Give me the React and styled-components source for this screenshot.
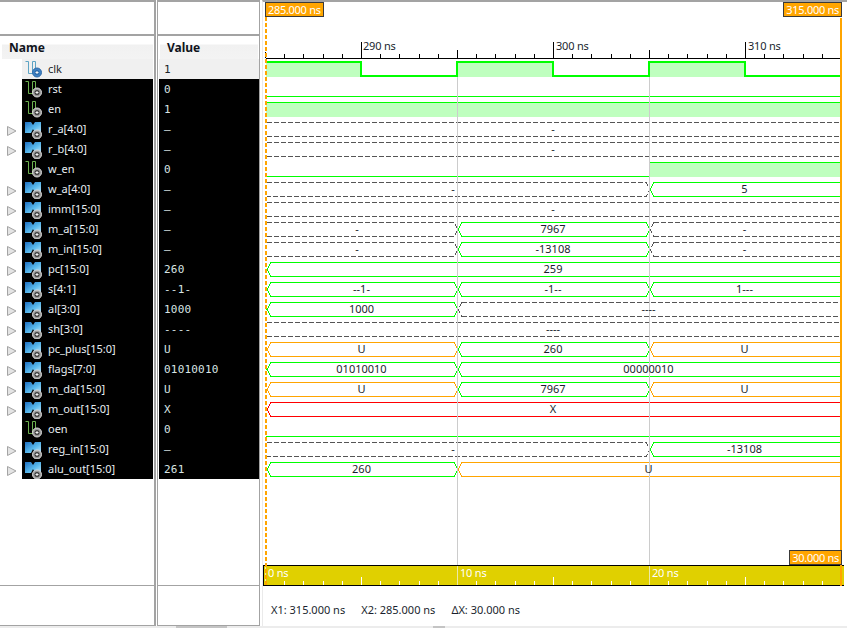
import React from "react";
import styled, { createGlobalStyle } from "styled-components";

const UI_FONT = `"Noto Sans", "DejaVu Sans", sans-serif`;

const GlobalStyle = createGlobalStyle`
  html, body { margin: 0; padding: 0; background: #fff; overflow: hidden; }
`;

const GREEN = "#00ff00";
const ORANGE = "#ffa500";
const RED = "#ff0000";
const DASH = "#555555";

const T0 = 266;
const T1 = 457;
const T2 = 649;
const END = 840;

const rows = [
  { name: "clk", value: "1", kind: "clk", selected: true },
  { name: "rst", value: "0", kind: "low" },
  { name: "en", value: "1", kind: "high" },
  { name: "r_a[4:0]", value: "–", bus: [{ to: END, label: "-", color: DASH }] },
  { name: "r_b[4:0]", value: "–", bus: [{ to: END, label: "-", color: DASH }] },
  { name: "w_en", value: "0", kind: "wen" },
  { name: "w_a[4:0]", value: "–", bus: [{ to: T2, label: "-", color: DASH, lx: 453 }, { to: END, label: "5", color: GREEN }] },
  { name: "imm[15:0]", value: "–", bus: [{ to: END, label: "-", color: DASH }] },
  { name: "m_a[15:0]", value: "–", bus: [{ to: T1, label: "-", color: DASH, lx: 357 }, { to: T2, label: "7967", color: GREEN }, { to: END, label: "-", color: DASH }] },
  { name: "m_in[15:0]", value: "–", bus: [{ to: T1, label: "-", color: DASH, lx: 357 }, { to: T2, label: "-13108", color: GREEN }, { to: END, label: "-", color: DASH }] },
  { name: "pc[15:0]", value: "260", bus: [{ to: END, label: "259", color: GREEN }] },
  { name: "s[4:1]", value: "--1-", bus: [{ to: T1, label: "--1-", color: GREEN }, { to: T2, label: "-1--", color: GREEN }, { to: END, label: "1---", color: GREEN }] },
  { name: "al[3:0]", value: "1000", bus: [{ to: T1, label: "1000", color: GREEN }, { to: END, label: "----", color: DASH }] },
  { name: "sh[3:0]", value: "----", bus: [{ to: END, label: "----", color: DASH }] },
  { name: "pc_plus[15:0]", value: "U", bus: [{ to: T1, label: "U", color: ORANGE }, { to: T2, label: "260", color: GREEN }, { to: END, label: "U", color: ORANGE }] },
  { name: "flags[7:0]", value: "01010010", bus: [{ to: T1, label: "01010010", color: GREEN }, { to: END, label: "00000010", color: GREEN }] },
  { name: "m_da[15:0]", value: "U", bus: [{ to: T1, label: "U", color: ORANGE }, { to: T2, label: "7967", color: GREEN }, { to: END, label: "U", color: ORANGE }] },
  { name: "m_out[15:0]", value: "X", bus: [{ to: END, label: "X", color: RED }] },
  { name: "oen", value: "0", kind: "low" },
  { name: "reg_in[15:0]", value: "–", bus: [{ to: T2, label: "-", color: DASH, lx: 453 }, { to: END, label: "-13108", color: GREEN }] },
  { name: "alu_out[15:0]", value: "261", bus: [{ to: T1, label: "260", color: GREEN }, { to: END, label: "U", color: ORANGE }] },
];

const Page = styled.div`
  width: 847px;
  height: 628px;
  display: flex;
  flex-direction: column;
  font-family: ${UI_FONT};
  background: #fff;
`;

const Panes = styled.div`
  display: flex;
  height: 626px;
`;

const Pane = styled.div`
  display: flex;
  flex-direction: column;
  width: ${(p) => p.$width}px;
  margin-left: ${(p) => p.$gap || 0}px;
  box-sizing: border-box;
  border-top: 2px solid #a3a3a3;
  border-right: ${(p) => p.$edge}px solid #a3a3a3;
  border-left: ${(p) => (p.$gap ? 1 : 0)}px solid #a3a3a3;
  border-bottom: 1px solid #a3a3a3;
`;

const TopBlank = styled.div`
  height: 32px;
  border-bottom: 2px solid #a3a3a3;
`;

const HeaderCell = styled.div`
  height: 23px;
  box-sizing: border-box;
  margin: 0 1px 0 2px;
  padding: 4px 0 0 ${(p) => p.$indent}px;
  font-size: 12px;
  line-height: 16px;
  font-weight: 700;
  color: #10141c;
  background: linear-gradient(#ffffff 0, #ffffff 8px, #f1f1f1 9px, #f3f3f3 100%);
`;

const RowList = styled.div`
  display: flex;
  flex-direction: column;
  flex: 1;
`;

const NameRow = styled.div`
  display: flex;
  height: 20px;
`;

const Expander = styled.div`
  width: 22px;
  flex: none;
  padding-left: 7px;
  box-sizing: border-box;
`;

const NameCell = styled.div`
  flex: 1;
  display: flex;
  align-items: center;
  gap: 6px;
  padding-left: 3px;
  margin-right: 1px;
  font-size: 11px;
  background: ${(p) => (p.$selected ? "#f0f0f0" : "#000")};
  color: ${(p) => (p.$selected ? "#1a1f2a" : "#e8eef2")};
`;

const NameText = styled.span`
  padding-bottom: 2px;
`;

const ValueCell = styled.div`
  height: 20px;
  margin: 0 0 0 1px;
  padding-left: 5px;
  font-family: "DejaVu Sans Mono", "Liberation Mono", monospace;
  font-size: 11px;
  letter-spacing: 0.2px;
  line-height: 22px;
  background: ${(p) => (p.$selected ? "#f0f0f0" : "#000")};
  color: ${(p) => (p.$selected ? "#1a1f2a" : "#d8e4e4")};
`;

const PaneFoot = styled.div`
  height: 39px;
  border-top: 1px solid #a3a3a3;
`;

const WavePane = styled.div`
  position: relative;
  display: flex;
  flex-direction: column;
  width: 585px;
  margin-left: 2px;
  box-sizing: border-box;
  border-top: 2px solid #a3a3a3;
  border-left: 1px solid #eaeaea;
`;

const WaveSvg = styled.svg`
  display: block;
  flex: none;
`;

const WaveLabel = styled.text`
  font-family: ${UI_FONT};
  font-size: 11px;
  fill: #1a1f2e;
  text-anchor: middle;
`;

const RulerLabel = styled.text`
  font-family: ${UI_FONT};
  font-size: 11px;
  letter-spacing: -0.2px;
  fill: ${(p) => p.$fill};
`;

const CursorTag = styled.div`
  position: absolute;
  top: ${(p) => p.$top}px;
  ${(p) => (p.$left !== undefined ? `left: ${p.$left}px;` : `right: ${p.$right}px;`)}
  height: 15px;
  box-sizing: border-box;
  padding: 0 2px;
  font-size: 11px;
  letter-spacing: -0.3px;
  line-height: 13px;
  white-space: nowrap;
  color: #fff;
  background: #ffa500;
  border: 1px solid #3a3a3a;
`;

const StatusBar = styled.div`
  display: flex;
  gap: 16px;
  padding: 16px 0 0 8px;
  font-size: 11px;
  line-height: 16px;
  color: #1a1f2e;
`;

const ScrollStrip = styled.div`
  display: flex;
  height: 2px;
  background: #ececec;
`;

const ScrollGrip = styled.div`
  width: ${(p) => p.$width}px;
  margin-left: ${(p) => p.$offset}px;
  background: #c4c4c4;
`;

function Triangle() {
  return (
    <svg width="10" height="20" viewBox="0 0 10 20">
      <polygon points="0.5,7.5 9,12 0.5,16.5" fill="#e4e4e4" stroke="#a4a4a4" />
    </svg>
  );
}

function Knob({ selected, cy }) {
  return (
    <g>
      <circle cx="12" cy={cy} r="4.5" fill={selected ? "#3f82c4" : "#9a9a9a"} stroke={selected ? "#2f6aa8" : "#dcdcdc"} />
      <circle cx="12" cy={cy} r="2.5" fill={selected ? "#2f6aa8" : "#3a3a3a"} />
      <path d={`M10.5 ${cy}h3M12 ${cy - 1.5}v3`} stroke="#f4f4f4" strokeWidth="1" fill="none" />
    </g>
  );
}

function BitIcon({ selected }) {
  return (
    <svg width="17" height="20" viewBox="0 0 17 20">
      <path
        d="M0.5 2.5H3.5V14.5H7.5V2.5H10.5V10"
        fill="none"
        stroke={selected ? "#5ea4c4" : "#6cb04e"}
        strokeWidth="1"
      />
      <Knob selected={selected} cy={13.5} />
    </svg>
  );
}

function BusIcon() {
  return (
    <svg width="17" height="20" viewBox="0 0 17 20">
      <defs>
        <linearGradient id="busFill" x1="0" y1="0" x2="1" y2="1">
          <stop offset="0" stopColor="#1f6fc0" />
          <stop offset="0.55" stopColor="#58b8ec" />
          <stop offset="1" stopColor="#bfe6fa" />
        </linearGradient>
      </defs>
      <polygon points="0,3 6,3 8,6 10,3 16,3 16,14 10,14 8,10 6,14 0,14" fill="url(#busFill)" />
      <Knob cy={15.5} />
    </svg>
  );
}

function Bus({ segs, top }) {
  const high = top + 3.5;
  const low = top + 17.5;
  const mid = top + 10.5;
  let from = T0;
  return segs.map((s, i) => {
    const start = from;
    from = s.to;
    const dashed = s.color === DASH;
    // a dashed bus that opens the trace runs straight out of the cursor
    const flatStart = dashed && start === T0;
    const left = flatStart ? start + 1 : start + 5;
    const opening = flatStart ? "" : `M${left} ${high}L${start + 1} ${mid}L${left} ${low}`;
    const closing =
      s.to === END
        ? `M${left} ${high}H${END}M${left} ${low}H${END}`
        : `M${left} ${high}H${s.to - 3}L${s.to + 1} ${mid}L${s.to - 3} ${low}H${left}`;
    return (
      <path
        key={i}
        d={opening + closing}
        fill="none"
        stroke={s.color}
        strokeWidth="1"
        strokeDasharray={dashed ? "5 2" : undefined}
        shapeRendering="crispEdges"
      />
    );
  });
}

function BusLabels({ segs, top }) {
  let from = T0;
  return segs.map((s, i) => {
    const start = from;
    from = s.to;
    return (
      <WaveLabel key={i} x={s.lx || (start + s.to) / 2} y={top + 14}>
        {s.label}
      </WaveLabel>
    );
  });
}

function Bit({ row, top }) {
  const high = top + 3.5;
  const low = top + 17.5;
  const fillBox = (x0, x1) => (
    <rect x={x0} y={top + 3} width={x1 - x0} height={15} fill="#bfffbf" />
  );
  if (row.kind === "clk") {
    const hi = top + 3;
    const lo = top + 17;
    return (
      <g>
        {fillBox(T0, 361)}
        {fillBox(T1, 553)}
        {fillBox(T2, 745)}
        <path
          d={`M${T0} ${hi}H361V${lo}H457V${hi}H553V${lo}H649V${hi}H745V${lo}H${END}`}
          fill="none"
          stroke={GREEN}
          strokeWidth="2"
          shapeRendering="crispEdges"
        />
      </g>
    );
  }
  if (row.kind === "wen") {
    return (
      <g>
        {fillBox(T2, END)}
        <path d={`M${T0} ${low}H${T2}M${T2} ${high}H${END}`} fill="none" stroke={GREEN} shapeRendering="crispEdges" />
      </g>
    );
  }
  if (row.kind === "high") {
    return (
      <g>
        {fillBox(T0, END)}
        <path d={`M${T0} ${high}H${END}`} stroke={GREEN} shapeRendering="crispEdges" />
      </g>
    );
  }
  return <path d={`M${T0} ${low}H${END}`} stroke={GREEN} shapeRendering="crispEdges" />;
}

const tickX = (i) => Math.floor(265.5 + 19.2 * i) + 0.5;
const tickIndexes = Array.from({ length: 30 }, (_, i) => i);

function TopTicks() {
  // the labelled ticks fall on 290, 300 and 310 ns
  return tickIndexes.map((i) => {
    const y = i === 0 ? 52 : (i - 5) % 10 === 0 ? 42 : i % 5 === 0 ? 50 : 54;
    return <path key={i} d={`M${tickX(i)} ${y}V58`} stroke="#000" shapeRendering="crispEdges" />;
  });
}

function BottomTicks() {
  return tickIndexes.map((i) => {
    const ten = i % 10 === 0;
    const y = ten ? 566 : i % 5 === 0 ? 577 : 581;
    return <path key={i} d={`M${tickX(i)} ${y}V585`} stroke={ten ? "#ece8a8" : "#ffffff"} shapeRendering="crispEdges" />;
  });
}

function WavePlot() {
  return (
    <WaveSvg width="584" height="584" viewBox="263 2 584 584">
      <path d="M266 58.5H841" stroke="#000" shapeRendering="crispEdges" />
      <TopTicks />
      <RulerLabel x="363" y="50" $fill="#1a1f2e">290 ns</RulerLabel>
      <RulerLabel x="556" y="50" $fill="#1a1f2e">300 ns</RulerLabel>
      <RulerLabel x="748" y="50" $fill="#1a1f2e">310 ns</RulerLabel>

      {rows.map((row, i) =>
        row.bus ? (
          <Bus key={row.name} segs={row.bus} top={59 + i * 20} />
        ) : (
          <Bit key={row.name} row={row} top={59 + i * 20} />
        )
      )}

      <path d="M457.5 77V565M649.5 77V565" stroke="#cccccc" shapeRendering="crispEdges" />

      {rows.map((row, i) =>
        row.bus ? <BusLabels key={row.name} segs={row.bus} top={59 + i * 20} /> : null
      )}

      <rect x="263" y="565" width="581" height="21" fill="#e0d000" />
      <path d="M263 565.5H844M263 585.5H844M263.5 565V586" stroke="#000" shapeRendering="crispEdges" />
      <BottomTicks />
      <RulerLabel x="268" y="577" $fill="#ffffff">0 ns</RulerLabel>
      <RulerLabel x="460" y="577" $fill="#ffffff">10 ns</RulerLabel>
      <RulerLabel x="652" y="577" $fill="#ffffff">20 ns</RulerLabel>

      <path d="M266 17V586" stroke={ORANGE} strokeWidth="2" strokeDasharray="4 2" shapeRendering="crispEdges" />
      <path d="M841 18V586" stroke={ORANGE} strokeWidth="2" shapeRendering="crispEdges" />
    </WaveSvg>
  );
}

export default function App() {
  return (
    <Page>
      <GlobalStyle />
      <Panes>
        <Pane $width={156} $edge={2}>
          <TopBlank />
          <HeaderCell $indent={7}>Name</HeaderCell>
          <RowList>
            {rows.map((row) => (
              <NameRow key={row.name}>
                <Expander>{row.bus ? <Triangle /> : null}</Expander>
                <NameCell $selected={row.selected}>
                  {row.bus ? <BusIcon /> : <BitIcon selected={row.selected} />}
                  <NameText>{row.name}</NameText>
                </NameCell>
              </NameRow>
            ))}
          </RowList>
          <PaneFoot />
        </Pane>
        <Pane $width={103} $gap={1} $edge={1}>
          <TopBlank />
          <HeaderCell $indent={7}>Value</HeaderCell>
          <RowList>
            {rows.map((row) => (
              <ValueCell key={row.name} $selected={row.selected}>
                {row.value}
              </ValueCell>
            ))}
          </RowList>
          <PaneFoot />
        </Pane>
        <WavePane>
          <WavePlot />
          <CursorTag $top={0} $left={2}>285.000 ns</CursorTag>
          <CursorTag $top={0} $right={5}>315.000 ns</CursorTag>
          <CursorTag $top={548} $right={5}>30.000 ns</CursorTag>
          <StatusBar>
            <span>X1: 315.000 ns</span>
            <span>X2: 285.000 ns</span>
            <span>ΔX: 30.000 ns</span>
          </StatusBar>
        </WavePane>
      </Panes>
      <ScrollStrip>
        <ScrollGrip $offset={176} $width={51} />
        <ScrollGrip $offset={206} $width={12} />
      </ScrollStrip>
    </Page>
  );
}
